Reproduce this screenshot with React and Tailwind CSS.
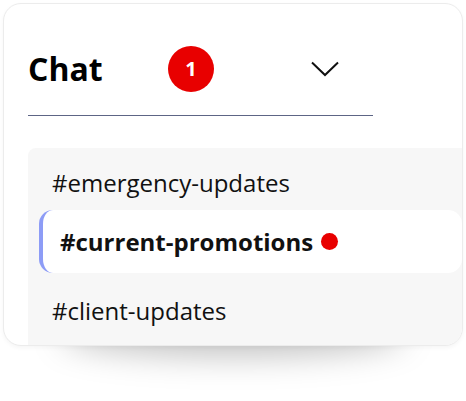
export default function App() {
  return (
    <div className="relative w-[466px] h-[401px] bg-white p-[3px] isolate" style={{ fontFamily: '"Open Sans", sans-serif' }}>
      <div className="absolute left-[60px] top-[312px] w-[346px] h-[44px] rounded-[50%] bg-[rgba(0,0,0,0.24)] blur-[16px] -z-10" />
      <div className="relative w-[460px] h-[343px] rounded-[18px] border border-[#ececec] bg-white overflow-hidden shadow-[0_2px_4px_rgba(0,0,0,0.04)] flex flex-col">
        <div className="mt-[42px] ml-[24px] flex items-center h-[46px]">
          <span className="text-[32px] font-bold text-black leading-none w-[140px]">Chat</span>
          <div className="w-[46px] h-[46px] rounded-full bg-[#e80000] flex items-center justify-center text-white text-[20px] font-bold leading-none">1</div>
          <svg className="ml-[97px]" width="28" height="16" viewBox="0 0 28 16" fill="none">
            <path d="M1 1.5 L14 14 L27 1.5" stroke="#111" strokeWidth="2" />
          </svg>
        </div>
        <div className="mt-[23px] ml-[24px] w-[345px] h-px bg-[#5d6585]" />
        <div className="mt-[32px] ml-[24px] flex-1 bg-[#f7f7f7] rounded-tl-lg pt-[19px] flex flex-col">
          <div className="pl-[24px] text-[24px] leading-[32px] text-[#111]">#emergency-updates</div>
          <div className="mt-[11px] ml-[11px] h-[63px] bg-white rounded-[14px] border-l-[4px] border-[#8d9cf6] pl-[17px] flex items-center">
            <span className="text-[24px] leading-[32px] font-bold text-[#111]">#current-promotions</span>
            <span className="ml-[8px] w-[17px] h-[17px] rounded-full bg-[#e80000]" />
          </div>
          <div className="mt-[22px] pl-[24px] text-[24px] leading-[32px] text-[#111]">#client-updates</div>
        </div>
      </div>
    </div>
  );
}
